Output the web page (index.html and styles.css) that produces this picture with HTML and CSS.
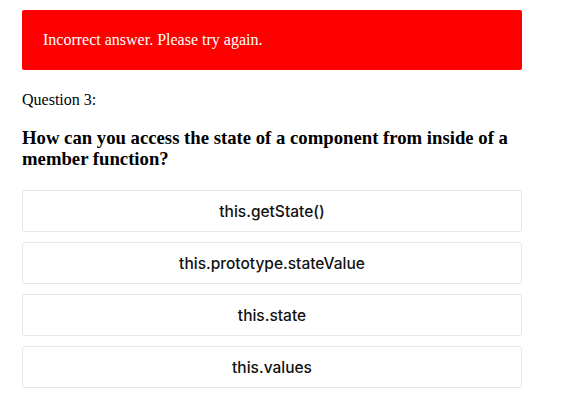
FILE: index.html
```html
<!DOCTYPE html>
<html>
<head>
<meta charset="utf-8">
<link rel="stylesheet" href="styles.css">
</head>
<body>
<div class="quiz">
  <div class="alert">Incorrect answer. Please try again.</div>
  <p class="qnum">Question 3:</p>
  <h3 class="question">How can you access the state of a component from inside of a member function?</h3>
  <div class="options">
    <button class="option">this.getState()</button>
    <button class="option">this.prototype.stateValue</button>
    <button class="option">this.state</button>
    <button class="option">this.values</button>
  </div>
</div>
</body>
</html>
```
FILE: styles.css
```css
html, body {
  margin: 0;
  padding: 0;
  background: #fff;
}
body {
  font-family: "Liberation Serif", "Times New Roman", serif;
  font-size: 16px;
  color: #000;
}
.quiz {
  width: 500px;
  padding: 10px 22px;
}
.alert {
  background: #ff0000;
  color: #fff;
  border-radius: 2px;
  height: 60px;
  box-sizing: border-box;
  padding: 0 21px;
  display: flex;
  align-items: center;
  font-size: 16px;
}
.qnum {
  margin: 20px 0 0;
  line-height: 20px;
}
.question {
  font-size: 18.72px;
  font-weight: bold;
  line-height: 21px;
  margin: 17px 0 0;
}
.options {
  display: flex;
  flex-direction: column;
  gap: 10px;
  margin-top: 21px;
}
.option {
  height: 42px;
  width: 100%;
  background: #fff;
  border: 1px solid #e6e6e6;
  border-radius: 3px;
  font-family: "Inter", "Noto Sans", sans-serif;
  font-size: 15.5px;
  font-weight: 500;
  color: #111;
  padding: 0;
  text-align: center;
}
```
